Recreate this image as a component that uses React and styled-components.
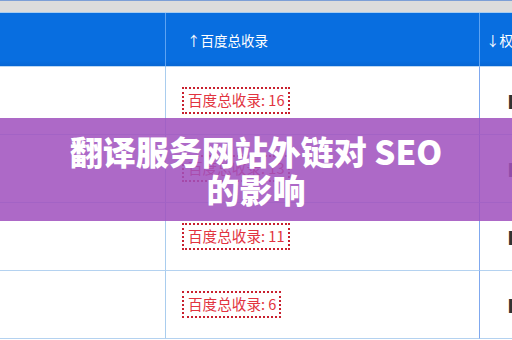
import React from "react";
import styled, { createGlobalStyle } from "styled-components";

const Global = createGlobalStyle`
  html, body { margin: 0; padding: 0; background: #ffffff; overflow: hidden; }
  body { font-family: "Noto Sans CJK SC", "Noto Sans", sans-serif; }
`;

const Page = styled.div`
  position: relative;
  width: 512px;
  height: 340px;
  overflow: hidden;
  background: #ffffff;
`;

const TopStrip = styled.div`
  height: 11px;
  background: #dcdcdc;
  border-top: 1px solid #7d9fd6;
  border-bottom: 1px solid #a9cdf0;
`;

const Grid = styled.div`
  display: grid;
  grid-template-columns: 166px 314px 1fr;
`;

const HeadCell = styled.div`
  height: 54px;
  box-sizing: border-box;
  background: linear-gradient(#086ee0 0%, #086ee0 90%, #0767d4 100%);
  border-bottom: 1px solid #bcd8f4;
  border-right: ${(p) => (p.$last ? "none" : "1px solid #5da3f2")};
  display: flex;
  align-items: center;
  padding-left: ${(p) => p.$pad}px;
  color: #ffffff;
  font-size: 13.5px;
  white-space: nowrap;
  overflow: hidden;
`;

const Cell = styled.div`
  height: 68px;
  box-sizing: border-box;
  border-bottom: 1px solid #b4d2f0;
  border-right: ${(p) => (p.$last ? "none" : `1px solid ${p.$line}`)};
  display: flex;
  align-items: center;
  padding-left: ${(p) => p.$pad}px;
  white-space: nowrap;
  overflow: hidden;
  color: #333333;
  font-size: 14px;
`;

const Badge = styled.span`
  display: inline-flex;
  align-items: center;
  height: 27px;
  box-sizing: border-box;
  padding: 0 3px 0 4px;
  border: 2px dotted #c8202e;
  color: #e2343f;
  font-size: 14.6px;
  line-height: 1;
`;

const Overlay = styled.div`
  position: absolute;
  left: 0;
  right: 0;
  top: 118px;
  height: 103px;
  background: rgba(160, 80, 190, 0.86);
  display: flex;
  align-items: center;
  justify-content: center;
`;

const Title = styled.h1`
  margin: 0;
  width: 400px;
  text-align: center;
  color: #ffffff;
  font-family: "Noto Sans CJK SC", "Noto Sans", sans-serif;
  font-weight: 900;
  font-size: 33px;
  line-height: 38px;
`;

const rows = ["16", "13", "11", "6"];

export default function App() {
  return (
    <Page>
      <Global />
      <TopStrip />
      <Grid>
        <HeadCell $pad={0} />
        <HeadCell $pad={21}>↑百度总收录</HeadCell>
        <HeadCell $pad={6} $last>↓权重</HeadCell>
        {rows.map((n) => (
          <React.Fragment key={n}>
            <Cell $pad={0} $line="#a9cdee" />
            <Cell $pad={16} $line="#7fa8ef">
              <Badge>百度总收录: {n}</Badge>
            </Cell>
            <Cell $pad={29} $last>
              ▌
            </Cell>
          </React.Fragment>
        ))}
      </Grid>
      <Overlay>
        <Title>翻译服务网站外链对 SEO 的影响</Title>
      </Overlay>
    </Page>
  );
}
